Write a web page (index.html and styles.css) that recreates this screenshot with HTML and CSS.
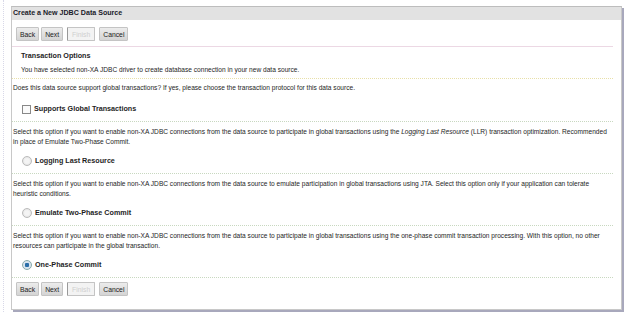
FILE: index.html
```html
<!DOCTYPE html>
<html lang="en">
<head>
    <meta charset="UTF-8">
    <title>Create a New JDBC Data Source</title>
    <link rel="stylesheet" href="styles.css">
</head>
<body>

<div class="page">
    <div class="panel">
        <div class="panel-title">Create a New JDBC Data Source</div>

        <div class="btn-row">
            <button class="btn">Back</button>
            <button class="btn">Next</button>
            <button class="btn btn-disabled" disabled>Finish</button>
            <button class="btn">Cancel</button>
        </div>

        <div class="intro">
            <h3>Transaction Options</h3>
            <p>You have selected non-XA JDBC driver to create database connection in your new data source.</p>
        </div>

        <div class="section first">
            <p>Does this data source support global transactions? If yes, please choose the transaction protocol for this data source.</p>
            <label class="option"><span class="check"></span>Supports Global Transactions</label>
        </div>

        <div class="section">
            <p>Select this option if you want to enable non-XA JDBC connections from the data source to participate in global transactions using the <i>Logging Last Resource</i> (LLR) transaction optimization. Recommended in place of Emulate Two-Phase Commit.</p>
            <label class="option"><span class="radio"></span>Logging Last Resource</label>
        </div>

        <div class="section">
            <p>Select this option if you want to enable non-XA JDBC connections from the data source to emulate participation in global transactions using JTA. Select this option only if your application can tolerate heuristic conditions.</p>
            <label class="option"><span class="radio"></span>Emulate Two-Phase Commit</label>
        </div>

        <div class="section">
            <p>Select this option if you want to enable non-XA JDBC connections from the data source to participate in global transactions using the one-phase commit transaction processing. With this option, no other resources can participate in the global transaction.</p>
            <label class="option"><span class="radio checked"></span>One-Phase Commit</label>
        </div>

        <div class="btn-row bottom">
            <button class="btn">Back</button>
            <button class="btn">Next</button>
            <button class="btn btn-disabled" disabled>Finish</button>
            <button class="btn">Cancel</button>
        </div>
    </div>
</div>

</body>
</html>
```

FILE: styles.css
```css
/* Global Styles */
body {
    margin: 0;
    background: #fff;
    font-family: 'Liberation Sans', Arial, sans-serif;
    font-size: 6.6px;
    color: #1e1e1e;
}

.page {
    margin-left: 3px;
    padding: 6px 4px 6px 7px;
    border-left: 1px dotted #d8d8e8;
    height: 312px;
    box-sizing: border-box;
}

.panel {
    width: 611px;
    height: 304px;
    box-sizing: border-box;
    border: 1px solid #c8c8c8;
    border-top-color: #bdbdbd;
    box-shadow: 2px 2px 0 #a8a8bc;
    background: #fff;
}

.panel-title {
    height: 13px;
    line-height: 13px;
    padding-left: 1px;
    background: #e2e2e2;
    font-weight: bold;
    font-size: 7.1px;
    color: #1a1a2a;
}

/* Buttons */
.btn-row {
    display: flex;
    gap: 2px;
    padding: 7px 0 5px 4px;
    border-bottom: 1px solid #ecd8e4;
    margin-right: 8px;
}

.btn {
    height: 14px;
    padding: 0 3px;
    font-family: inherit;
    font-size: 6.8px;
    color: #222;
    background: linear-gradient(#ececec, #d4d4d4);
    border: 1px solid #c4c4c4;
    border-radius: 1px;
}

.btn-disabled {
    color: #cfcfcf;
    background: #f3f3f3;
    border-left: 1px solid #999;
    margin: 0 2px;
    padding: 0 4px;
}

.btn-row.bottom {
    border-bottom: none;
    padding-top: 4px;
}

/* Sections */
.intro {
    padding: 4px 0 3px 9px;
    border-bottom: 1px dotted #e8e0a8;
    margin-right: 8px;
}

h3 {
    margin: 0 0 4px;
    font-size: 7.2px;
    line-height: 10px;
}

p {
    margin: 0;
    line-height: 10px;
}

.section {
    padding: 5px 0 7px 1px;
    border-bottom: 1px dotted #c8d8c0;
    margin-right: 8px;
}

.section.first {
    padding-top: 4px;
    padding-bottom: 7px;
}

.option {
    display: flex;
    align-items: center;
    gap: 3px;
    margin: 9px 0 0 9px;
    font-weight: bold;
    font-size: 7.2px;
    line-height: 10px;
}

.section.first .option {
    margin-top: 11px;
}

.check {
    width: 7px;
    height: 7px;
    border: 1px solid #888;
    background: #fafafa;
}

.radio {
    width: 8px;
    height: 8px;
    border-radius: 50%;
    border: 1px solid #bbb;
    background: radial-gradient(circle, #f4f4f4 40%, #d8d8d8);
}

.radio.checked {
    background: radial-gradient(circle, #2a6ea8 35%, #d8e4ee 45%);
    border-color: #8aa;
}
```
